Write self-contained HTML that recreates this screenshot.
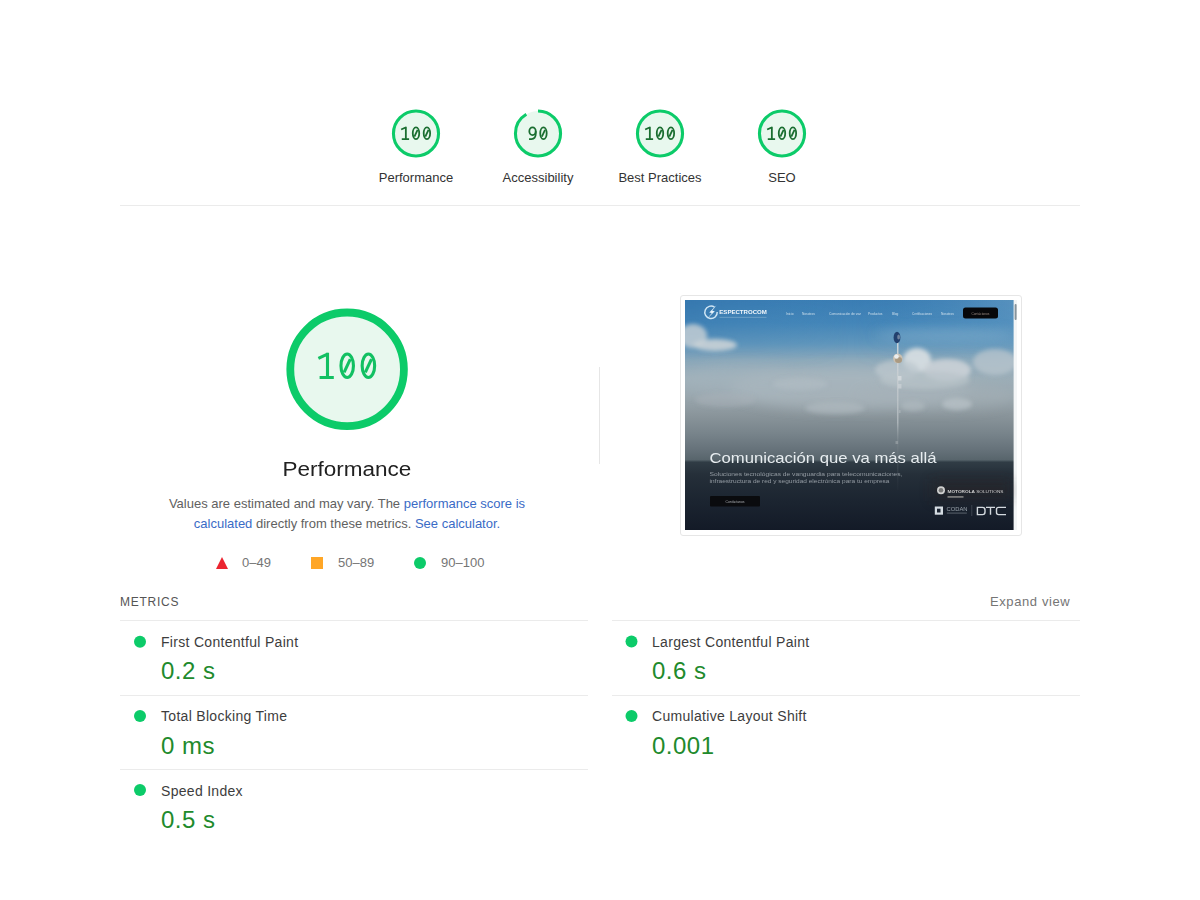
<!DOCTYPE html>
<html><head><meta charset="utf-8">
<style>
*{box-sizing:border-box;margin:0;padding:0}
html,body{width:1200px;height:900px;background:#fff;overflow:hidden}
body{position:relative;font-family:"Liberation Sans",sans-serif;color:#212121}
.abs{position:absolute}
.t{position:absolute;white-space:nowrap;line-height:1}
.gl{font-size:13px;color:#333;text-align:center;width:140px}
.hr{position:absolute;height:1px;background:#ebebeb}
.ml{font-size:14px;color:#3d3d3d;letter-spacing:0.3px}
.mv{font-size:24px;color:#218a2c;letter-spacing:0.5px}
.lg{font-size:13px;color:#757575}
</style></head><body>

<div class="t gl" style="left:346px;top:171px">Performance</div>
<div class="t gl" style="left:468px;top:171px">Accessibility</div>
<div class="t gl" style="left:590px;top:171px">Best Practices</div>
<div class="t gl" style="left:712px;top:171px">SEO</div>

<div class="hr" style="left:120px;top:205px;width:960px"></div>

<div class="t" style="left:227px;top:459px;width:240px;text-align:center;font-size:20px;color:#212121;transform:scaleX(1.125);transform-origin:120.5px 0">Performance</div>

<div class="t" style="left:147px;top:494px;width:400px;text-align:center;font-size:13px;color:#616161;line-height:20px">Values are estimated and may vary. The <span style="color:#3a6bc6">performance score is</span><br><span style="color:#3a6bc6">calculated</span> directly from these metrics. <span style="color:#3a6bc6">See calculator.</span></div>

<div class="t lg" style="left:242px;top:556px">0–49</div>
<div class="t lg" style="left:338px;top:556px">50–89</div>
<div class="t lg" style="left:441px;top:556px">90–100</div>

<div class="abs" style="left:599px;top:367px;width:1px;height:97px;background:#e6e6e6"></div>

<!-- screenshot -->
<div class="abs" style="left:680px;top:295px;width:342px;height:241px;border:1px solid #e6e6e6;border-radius:3px;background:#fff"></div>
<div class="abs" style="left:685px;top:300px;width:332px;height:230px;overflow:hidden">
<svg width="332" height="230" viewBox="0 0 332 230" style="display:block">
<defs>
<linearGradient id="sky" x1="0" y1="0" x2="0" y2="1">
<stop offset="0" stop-color="#3a7db4"/>
<stop offset="0.10" stop-color="#4486b9"/>
<stop offset="0.19" stop-color="#6096bc"/>
<stop offset="0.26" stop-color="#8ca9bb"/>
<stop offset="0.34" stop-color="#9caeb8"/>
<stop offset="0.42" stop-color="#9aa7ae"/>
<stop offset="0.50" stop-color="#8a959b"/>
<stop offset="0.58" stop-color="#78848b"/>
<stop offset="0.65" stop-color="#66727a"/>
<stop offset="0.695" stop-color="#58656c"/>
<stop offset="0.705" stop-color="#303c45"/>
<stop offset="0.76" stop-color="#252f39"/>
<stop offset="0.88" stop-color="#1b2430"/>
<stop offset="1" stop-color="#131a27"/>
</linearGradient>
<linearGradient id="skyx" x1="0" y1="0" x2="1" y2="0">
<stop offset="0" stop-color="#2f6fa6" stop-opacity="0.35"/>
<stop offset="0.5" stop-color="#3f86b8" stop-opacity="0"/>
<stop offset="1" stop-color="#8fb8d0" stop-opacity="0.35"/>
</linearGradient>
<linearGradient id="fadeTop" x1="0" y1="0" x2="0" y2="1">
<stop offset="0" stop-color="#fff" stop-opacity="1"/>
<stop offset="1" stop-color="#fff" stop-opacity="0"/>
</linearGradient>
<mask id="topmask"><rect width="332" height="70" fill="url(#fadeTop)"/></mask>
<filter id="b2" x="-50%" y="-50%" width="200%" height="200%"><feGaussianBlur stdDeviation="2"/></filter>
<filter id="b3" x="-50%" y="-50%" width="200%" height="200%"><feGaussianBlur stdDeviation="3"/></filter>
<filter id="b6" x="-50%" y="-50%" width="200%" height="200%"><feGaussianBlur stdDeviation="6"/></filter>
<filter id="b1" x="-50%" y="-50%" width="200%" height="200%"><feGaussianBlur stdDeviation="0.5"/></filter>
</defs>
<rect width="332" height="230" fill="url(#sky)"/>
<rect width="332" height="70" fill="url(#skyx)" mask="url(#topmask)"/>
<!-- clouds -->
<g filter="url(#b6)">
<ellipse cx="165" cy="88" rx="120" ry="22" fill="#aebac1" opacity="0.55"/>
<ellipse cx="60" cy="80" rx="70" ry="16" fill="#a9b6be" opacity="0.45"/>
<ellipse cx="250" cy="96" rx="80" ry="14" fill="#a7b2b9" opacity="0.45"/>
<ellipse cx="260" cy="35" rx="70" ry="6" fill="#8fb6d0" opacity="0.45"/>
</g>
<g filter="url(#b2)">
<ellipse cx="8" cy="36" rx="14" ry="12" fill="#c2ccd3" opacity="0.85"/>
<ellipse cx="30" cy="45" rx="22" ry="6" fill="#c9d1d6" opacity="0.9"/>
<ellipse cx="232" cy="60" rx="14" ry="12" fill="#d5dce0" opacity="0.95"/>
<ellipse cx="262" cy="70" rx="24" ry="11" fill="#cbd2d7" opacity="0.9"/>
<ellipse cx="212" cy="70" rx="22" ry="10" fill="#bcc7cd" opacity="0.75"/>
<ellipse cx="240" cy="80" rx="45" ry="9" fill="#b8c3c9" opacity="0.7"/>
<ellipse cx="310" cy="62" rx="22" ry="13" fill="#bac6cd" opacity="0.75"/>
<ellipse cx="272" cy="104" rx="15" ry="6" fill="#b8c2c7" opacity="0.75"/>
<ellipse cx="228" cy="106" rx="12" ry="5" fill="#b3bdc2" opacity="0.6"/>
<ellipse cx="150" cy="108" rx="30" ry="6" fill="#b2bcc1" opacity="0.6"/>
<ellipse cx="115" cy="84" rx="28" ry="6" fill="#b3bec5" opacity="0.55"/>
<ellipse cx="40" cy="100" rx="30" ry="7" fill="#aab4ba" opacity="0.45"/>
</g>
<!-- tower -->
<linearGradient id="mastg" x1="0" y1="0" x2="0" y2="1"><stop offset="0" stop-color="#d5dadd" stop-opacity="0.9"/><stop offset="0.55" stop-color="#b9c0c4" stop-opacity="0.75"/><stop offset="0.68" stop-color="#7d878d" stop-opacity="0.5"/><stop offset="1" stop-color="#3a444c" stop-opacity="0.1"/></linearGradient>
<rect x="212" y="40" width="1.5" height="150" fill="url(#mastg)"/>
<ellipse cx="212" cy="37.5" rx="3.4" ry="5.8" fill="#22406e"/>
<ellipse cx="213.6" cy="37" rx="1.4" ry="2.6" fill="#8495ab" opacity="0.8"/>
<ellipse cx="212.8" cy="58.5" rx="4.8" ry="4.8" fill="#c9c0b2"/>
<ellipse cx="213.5" cy="60" rx="3.5" ry="3" fill="#9c8a6e" opacity="0.7"/>
<ellipse cx="211.5" cy="56.5" rx="2.3" ry="2.2" fill="#eceeee"/>
<rect x="213" y="76" width="3.5" height="4.5" fill="#d6dbde" opacity="0.85"/>
<rect x="213" y="84" width="3.5" height="4.5" fill="#c8cfd3" opacity="0.85"/>
<rect x="213" y="110" width="2.6" height="3" fill="#a5aeb3"/>
<rect x="210.5" y="141" width="2.6" height="3" fill="#9aa2a7" opacity="0.7"/>
<!-- nav -->
<path d="M29.5,7.2 A6.2,6.2 0 1,0 32.2,12" fill="none" stroke="#cfe6f5" stroke-width="1.5"/>
<path d="M31.5,5.2 L24.2,12.6 L26.8,13 L22.2,18.8 L29.8,11.2 L27.2,10.8 Z" fill="#e6f3fb"/>
<text x="34.3" y="14.4" font-family="Liberation Sans" font-weight="bold" font-size="5.6" fill="#f2f7fb" textLength="47.5" lengthAdjust="spacingAndGlyphs" filter="url(#b1)">ESPECTROCOM</text>
<rect x="34.5" y="16.8" width="47" height="1.2" fill="#a9c9de" opacity="0.35"/>
<g fill="#e2edf4" opacity="0.85" font-family="Liberation Sans" font-size="3.2">
<text x="101" y="14.6">Inicio</text>
<text x="117" y="14.6">Nosotros</text>
<text x="144" y="14.6" textLength="32" lengthAdjust="spacingAndGlyphs">Comunicación de voz</text>
<text x="183" y="14.6">Productos</text>
<text x="207" y="14.6">Blog</text>
<text x="227" y="14.6" textLength="20" lengthAdjust="spacingAndGlyphs">Certificaciones</text>
<text x="256" y="14.6">Nosotros</text>
</g>
<rect x="278" y="7.6" width="35" height="11" rx="2.5" fill="#07080a"/>
<text x="295.5" y="14.5" font-family="Liberation Sans" font-size="3.2" fill="#9a8a80" text-anchor="middle">Contáctanos</text>
<!-- scrollbar -->
<rect x="328.6" y="0" width="3.4" height="230" fill="#f3f5f6"/>
<rect x="329.6" y="4" width="2" height="16" rx="1" fill="#86939b"/>
<!-- hero text -->
<text x="24.5" y="163" font-family="Liberation Sans" font-size="15" fill="#e8edf0" textLength="227" lengthAdjust="spacingAndGlyphs">Comunicación que va más allá</text>
<g fill="#b8bfc5" opacity="0.75" font-family="Liberation Sans" font-size="5.6" filter="url(#b1)">
<text x="24.5" y="175.5" textLength="193" lengthAdjust="spacingAndGlyphs">Soluciones tecnológicas de vanguardia para telecomunicaciones,</text>
<text x="24.5" y="183.3" textLength="180" lengthAdjust="spacingAndGlyphs">infraestructura de red y seguridad electrónica para tu empresa</text>
</g>
<rect x="25" y="196" width="50" height="10.5" rx="1" fill="#0a0b0e"/>
<text x="50" y="202.8" font-family="Liberation Sans" font-size="3.4" fill="#a9acb0" text-anchor="middle">Contáctanos</text>
<!-- partners -->
<rect x="246" y="179" width="80" height="22" fill="#2a2420" opacity="0.42" filter="url(#b6)"/>
<circle cx="256" cy="190.2" r="4" fill="#d0d0d0"/>
<circle cx="256" cy="190.2" r="2.3" fill="#3a3a3a" opacity="0.6"/>
<text x="262.5" y="192.6" font-family="Liberation Sans" font-weight="bold" font-size="4" fill="#cfcfcf" textLength="56" lengthAdjust="spacingAndGlyphs">MOTOROLA <tspan font-weight="normal">SOLUTIONS</tspan></text>
<rect x="262.5" y="196" width="16" height="1.8" fill="#7a7a7a"/>
<rect x="249.8" y="206.5" width="8.2" height="8.2" fill="#d5dce2"/>
<rect x="252" y="208.7" width="3.5" height="3.8" fill="#1a2330"/>
<text x="261.5" y="210.8" font-family="Liberation Sans" font-size="4.8" fill="#9aa3ab" textLength="21" lengthAdjust="spacingAndGlyphs">CODAN</text>
<rect x="261.8" y="212.5" width="20" height="1.2" fill="#4f5862"/>
<rect x="286.5" y="205" width="0.7" height="11" fill="#4a525c"/>
<g fill="none" stroke="#d3d9de" stroke-width="1.4">
<path d="M292.4,207.4 H297.5 Q300,207.4 300,210 V212 Q300,214.6 297.5,214.6 H292.4 Z"/>
<path d="M301,207.4 H310 M305.5,207.4 V214.8"/>
<path d="M321,207.4 H313.5 Q311.5,207.4 311.5,209.5 V212.5 Q311.5,214.6 313.5,214.6 H321"/>
</g>
</svg>

</div>

<div class="t" style="left:120px;top:596px;font-size:12px;letter-spacing:0.75px;color:#555">METRICS</div>
<div class="t" style="left:990px;top:595px;font-size:13px;letter-spacing:0.6px;color:#757575">Expand view</div>

<div class="hr" style="left:120px;top:620px;width:468px"></div>
<div class="hr" style="left:612px;top:620px;width:468px"></div>
<div class="hr" style="left:120px;top:695px;width:468px"></div>
<div class="hr" style="left:612px;top:695px;width:468px"></div>
<div class="hr" style="left:120px;top:769px;width:468px"></div>

<div class="t ml" style="left:161px;top:635px">First Contentful Paint</div>
<div class="t mv" style="left:161px;top:659px">0.2 s</div>
<div class="t ml" style="left:652px;top:635px">Largest Contentful Paint</div>
<div class="t mv" style="left:652px;top:659px">0.6 s</div>
<div class="t ml" style="left:161px;top:709px">Total Blocking Time</div>
<div class="t mv" style="left:161px;top:734px">0 ms</div>
<div class="t ml" style="left:652px;top:709px">Cumulative Layout Shift</div>
<div class="t mv" style="left:652px;top:734px">0.001</div>
<div class="t ml" style="left:161px;top:784px">Speed Index</div>
<div class="t mv" style="left:161px;top:808px">0.5 s</div>

<svg class="abs" style="left:0;top:0" width="1200" height="900" viewBox="0 0 1200 900"><circle cx="416" cy="133.5" r="22.55" fill="#e8f8ee"/><circle cx="416" cy="133.5" r="22.55" fill="none" stroke="#0ccb69" stroke-width="3.09"/><g fill="none" stroke="#1a6e30" stroke-width="3.5" transform="translate(399.62,126.60) scale(0.515,0.5)"><path d="M12.10,0.20 V25.00 M12.60,1.30 L3.00,5.90 M4.20,25.00 H18.40"/><ellipse cx="31.80" cy="13.25" rx="6.25" ry="11.70"/><path d="M34.90,6.60 L28.70,19.90"/><ellipse cx="53.00" cy="13.25" rx="6.25" ry="11.70"/><path d="M56.10,6.60 L49.90,19.90"/></g><circle cx="538" cy="133.5" r="22.55" fill="#e8f8ee"/><circle cx="538" cy="133.5" r="22.55" fill="none" stroke="#0ccb69" stroke-width="3.09" stroke-dasharray="128.53 141.71" transform="rotate(-90 538 133.5)"/><g fill="none" stroke="#1a6e30" stroke-width="3.5" transform="translate(527.08,126.60) scale(0.515,0.5)"><ellipse cx="10.60" cy="9.30" rx="6.25" ry="7.75"/><path d="M16.85,9.30 V14.00 C16.85,21.50 13.50,25.00 8.50,25.00 H3.80"/><ellipse cx="31.80" cy="13.25" rx="6.25" ry="11.70"/><path d="M34.90,6.60 L28.70,19.90"/></g><circle cx="660" cy="133.5" r="22.55" fill="#e8f8ee"/><circle cx="660" cy="133.5" r="22.55" fill="none" stroke="#0ccb69" stroke-width="3.09"/><g fill="none" stroke="#1a6e30" stroke-width="3.5" transform="translate(643.62,126.60) scale(0.515,0.5)"><path d="M12.10,0.20 V25.00 M12.60,1.30 L3.00,5.90 M4.20,25.00 H18.40"/><ellipse cx="31.80" cy="13.25" rx="6.25" ry="11.70"/><path d="M34.90,6.60 L28.70,19.90"/><ellipse cx="53.00" cy="13.25" rx="6.25" ry="11.70"/><path d="M56.10,6.60 L49.90,19.90"/></g><circle cx="782" cy="133.5" r="22.55" fill="#e8f8ee"/><circle cx="782" cy="133.5" r="22.55" fill="none" stroke="#0ccb69" stroke-width="3.09"/><g fill="none" stroke="#1a6e30" stroke-width="3.5" transform="translate(765.62,126.60) scale(0.515,0.5)"><path d="M12.10,0.20 V25.00 M12.60,1.30 L3.00,5.90 M4.20,25.00 H18.40"/><ellipse cx="31.80" cy="13.25" rx="6.25" ry="11.70"/><path d="M34.90,6.60 L28.70,19.90"/><ellipse cx="53.00" cy="13.25" rx="6.25" ry="11.70"/><path d="M56.10,6.60 L49.90,19.90"/></g><circle cx="347.1" cy="369.3" r="56.81" fill="#e8f8ee"/><circle cx="347.1" cy="369.3" r="56.81" fill="none" stroke="#0ccb69" stroke-width="7.79"/><g fill="none" stroke="#12c062" stroke-width="3.1" transform="translate(315.40,352.50) scale(1.0,1.0)"><path d="M12.10,0.20 V25.00 M12.60,1.30 L3.00,5.90 M4.20,25.00 H18.40"/><ellipse cx="31.80" cy="13.25" rx="6.25" ry="11.70"/><path d="M34.90,6.60 L28.70,19.90"/><ellipse cx="53.00" cy="13.25" rx="6.25" ry="11.70"/><path d="M56.10,6.60 L49.90,19.90"/></g><polygon points="222,557 228,569 216,569" fill="#eb2530"/><rect x="311" y="557" width="12" height="12" fill="#ffa626"/><circle cx="420" cy="563" r="6" fill="#0ccb69"/><circle cx="140" cy="641.7" r="6" fill="#0ccb69"/><circle cx="631.5" cy="641.5" r="6" fill="#0ccb69"/><circle cx="140" cy="716" r="6" fill="#0ccb69"/><circle cx="631.5" cy="716" r="6" fill="#0ccb69"/><circle cx="140" cy="790" r="6" fill="#0ccb69"/></svg>
</body></html>
